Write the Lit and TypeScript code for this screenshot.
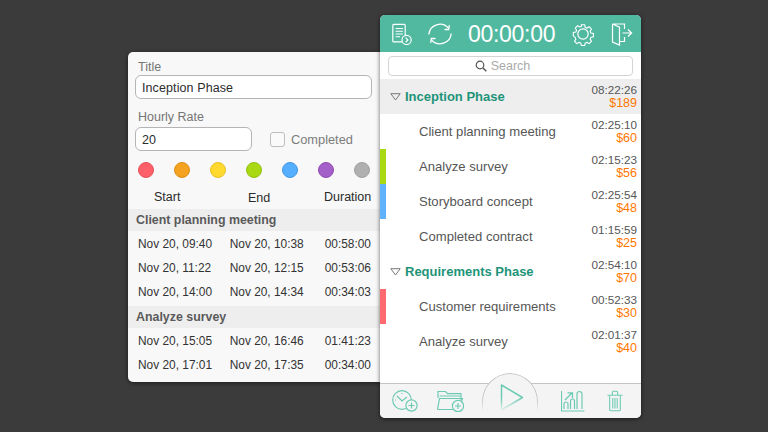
import { LitElement, html, css, svg } from "lit";
import { customElement } from "lit/decorators.js";

const dots = ["#ff5f68", "#f4a321", "#ffd92e", "#a8d912", "#56aeff", "#a45fc8", "#b0b0b0"];
const dotBorders = ["#e8505a", "#dc8f14", "#e8c020", "#93bf10", "#3f98e8", "#8f4cb0", "#a0a0a0"];

type Row = { name: string; time: string; cost: string; bar?: string; group?: boolean; shaded?: boolean };
const rows: Row[] = [
  { name: "Inception Phase", time: "08:22:26", cost: "$189", group: true, shaded: true },
  { name: "Client planning meeting", time: "02:25:10", cost: "$60" },
  { name: "Analyze survey", time: "02:15:23", cost: "$56", bar: "#a8d912" },
  { name: "Storyboard concept", time: "02:25:54", cost: "$48", bar: "#5fb2fb" },
  { name: "Completed contract", time: "01:15:59", cost: "$25" },
  { name: "Requirements Phase", time: "02:54:10", cost: "$70", group: true },
  { name: "Customer requirements", time: "00:52:33", cost: "$30", bar: "#ff6a70" },
  { name: "Analyze survey", time: "02:01:37", cost: "$40" },
];

const sessions: { title: string; items: string[][] }[] = [
  {
    title: "Client planning meeting",
    items: [
      ["Nov 20, 09:40", "Nov 20, 10:38", "00:58:00"],
      ["Nov 20, 11:22", "Nov 20, 12:15", "00:53:06"],
      ["Nov 20, 14:00", "Nov 20, 14:34", "00:34:03"],
    ],
  },
  {
    title: "Analyze survey",
    items: [
      ["Nov 20, 15:05", "Nov 20, 16:46", "01:41:23"],
      ["Nov 20, 17:01", "Nov 20, 17:35", "00:34:00"],
    ],
  },
];

const icoReport = svg`<svg width="22" height="22" viewBox="0 0 24 24" fill="none" stroke="#fff" stroke-width="1.300">
  <path d="M15.500 13V2.500a1 1 0 0 0-1-1H3a1 1 0 0 0-1 1v17a1 1 0 0 0 1 1h9"/>
  <path d="M5 6h8M5 9h8M5 12h8M5 15h5"/>
  <circle cx="17" cy="18.500" r="5"/><path d="M16 16l2.500 2.500-2.500 2.500"/></svg>`;
const icoSync = svg`<svg width="26" height="24" viewBox="0 0 26 24" fill="none" stroke="#fff" stroke-width="1.300">
  <path d="M1.800 12.500A11.200 11.200 0 0 1 21.500 6.200"/><path d="M24.200 11.500A11.200 11.200 0 0 1 4.500 17.800"/>
  <path d="M17.500 7.500l4.200 0 .6-4.300"/><path d="M8.500 16.500l-4.200 0-.6 4.300"/></svg>`;
const icoGear = svg`<svg width="24" height="24" viewBox="0 0 24 24" fill="none" stroke="#fff" stroke-width="1.200">
  <circle cx="12" cy="12" r="5.200"/>
  <path d="M10.200 2h3.600l.6 2.700 1.900.8 2.400-1.400 2.500 2.500-1.400 2.400.8 1.900 2.700.6v3.600l-2.700.6-.8 1.900 1.400 2.400-2.500 2.500-2.400-1.400-1.900.8-.6 2.700h-3.600l-.6-2.700-1.900-.8-2.400 1.400-2.500-2.500 1.400-2.400-.8-1.900L1.500 14v-3.600l2.700-.6.8-1.900-1.400-2.400 2.500-2.500 2.400 1.400 1.900-.8z" transform="translate(12 12) scale(.92) translate(-12 -12)"/></svg>`;
const icoExit = svg`<svg width="24" height="24" viewBox="0 0 24 24" fill="none" stroke="#fff" stroke-width="1.200">
  <path d="M14.500 7V2H2.500l7 3.200V23l-7-3V2"/><path d="M9.500 19.500h5V15"/>
  <path d="M12.500 11h9M18 7.500l3.600 3.500-3.600 3.500"/></svg>`;
const plus = (cx: number, cy: number) => svg`<circle cx=${cx} cy=${cy} r="5.600" fill="#f4f4f4"/><path d="M${cx - 3} ${cy}h6M${cx} ${cy - 3}v6"/>`;
const icoClock = svg`<svg width="26" height="22" viewBox="0 0 26 22" fill="none" stroke="#6ccab2" stroke-width="1.200">
  <circle cx="10" cy="10" r="9.300"/><path d="M10 3v1M3 10h1M5 6l5 5 5-4" />${plus(19.500, 15.500)}</svg>`;
const icoFolder = svg`<svg width="28" height="22" viewBox="0 0 28 22" fill="none" stroke="#6ccab2" stroke-width="1.200">
  <path d="M2 8V1.500h7.500l2 2.200H25V10"/><path d="M3.500 6h21"/><path d="M1.500 19.500 3.500 8.500H26.500L25 13"/><path d="M1.500 19.500H19"/>${plus(22, 16)}</svg>`;
const icoChart = svg`<svg width="24" height="22" viewBox="0 0 24 22" fill="none" stroke="#6ccab2" stroke-width="1.200">
  <path d="M.5 1v20h23"/><path d="M3 19v-5a2 2 0 0 1 4 0v5M9.500 19v-8a2 2 0 0 1 4 0v8M16 19V4a2.500 2.500 0 0 1 5 0v15"/>
  <path d="M4 10l7-7M6.500 2.800H11.500V8" stroke-width="1.300"/></svg>`;
const icoTrash = svg`<svg width="16" height="24" viewBox="0 0 18 24" fill="none" stroke="#6ccab2" stroke-width="1.200">
  <path d="M.5 5.500h17M6 5V2.500a1.500 1.500 0 0 1 1.500-1.500h3A1.500 1.500 0 0 1 12 2.500V5"/>
  <path d="M3 6v15.500a1.500 1.500 0 0 0 1.500 1.500h9a1.500 1.500 0 0 0 1.500-1.500V6M6.500 8.500v12M9 8.500v12M11.500 8.500v12"/></svg>`;
const icoSearch = svg`<svg width="12" height="12" viewBox="0 0 12 12" fill="none" stroke="#555" stroke-width="1.200"><circle cx="5" cy="5" r="3.800"/><path d="M7.800 7.800l3.500 3.500" stroke-width="1.500"/></svg>`;
const icoTri = svg`<svg width="11" height="8" viewBox="0 0 11 8" fill="none" stroke="#777" stroke-width="1"><path d="M.8.700h9.400L5.500 7z"/></svg>`;
const icoPlay = svg`<svg width="24" height="27" viewBox="0 0 24 27" fill="none" stroke="#6ccab2" stroke-width="1.500" stroke-linejoin="round"><path d="M1.500 1v25L22.500 13.500z"/></svg>`;

@customElement("app-root")
export class AppRoot extends LitElement {
  static styles = css`
    :host { display: block; position: relative; width: 768px; height: 432px; background: #3b3b3b; overflow: hidden;
      font-family: "Liberation Sans", Arial, sans-serif; }
    .left { position: absolute; left: 128px; top: 52px; width: 253px; height: 330px; box-sizing: border-box;
      background: #f8f8f8; border-radius: 5px 0 0 5px; box-shadow: 0 1px 4px rgba(0,0,0,.55); padding: 8px 0 0; overflow: hidden; }
    .lab { font-size: 12.500px; line-height: 15px; color: #757575; padding-left: 10px; }
    .input { box-sizing: border-box; height: 24px; background: #fff; border: 1px solid #b5b5b5; border-radius: 6px;
      font-size: 12.500px; line-height: 24px; color: #2c2c2c; padding-left: 6px; letter-spacing: .1px; }
    .t { width: 237px; margin: 0 0 0 7px; }
    .lab2 { margin-top: 11px; }
    .rate { display: flex; align-items: center; margin: 2px 0 0 7px; }
    .r { width: 117px; }
    .chk { box-sizing: border-box; width: 15px; height: 15px; background: #fafafa; border: 1px solid #bdbdbd; border-radius: 3px; margin-left: 18px; }
    .chkl { font-size: 12.800px; color: #7c7c7c; margin-left: 6px; }
    .dots { display: flex; gap: 20px; margin: 11px 0 0 10px; }
    .dot { box-sizing: border-box; width: 16px; height: 16px; border-radius: 50%; border: 1px solid; }
    .heads { display: grid; grid-template-columns: 94px 100px 59px; margin-top: 11px; height: 16px; font-size: 12.500px; line-height: 16px; color: #2a2a2a; }
    .heads span:nth-child(1) { padding-left: 26px; }
    .heads span:nth-child(2) { padding-left: 26px; padding-top: 1px; }
    .heads span:nth-child(3) { padding-left: 2px; white-space: nowrap; }
    .sec { margin-top: 4px; height: 22px; padding-left: 8px; background: #eeeeee; font-size: 12.400px; font-weight: 700; line-height: 22px; color: #5a5a5a; }
    .sec.next { margin-top: 2px; }
    .trow { display: grid; grid-template-columns: 91.700px 81px 60.300px; height: 24.300px; align-items: center; padding-left: 10px; font-size: 11.900px; color: #333; }
    .trow span:nth-child(3) { text-align: right; }
    .rows-first { height: .5px; }

    .right { position: absolute; left: 380px; top: 15px; width: 261px; height: 403px; display: flex; flex-direction: column;
      background: #fff; border-radius: 5px; box-shadow: 0 1px 4px rgba(0,0,0,.6); overflow: hidden; }
    .top { height: 37px; flex: none; background: #52b9a1; display: flex; align-items: center; color: #fff; padding-left: 11px; }
    .top svg { display: block; }
    .sync { margin-left: 14px; }
    .clock { font-size: 23px; letter-spacing: -.3px; margin-left: 15px; padding-top: 1px; width: 87px; white-space: nowrap; }
    .gear { margin-left: 16px; }
    .exit { margin-left: 15px; }
    .sb { height: 27px; flex: none; display: flex; align-items: center; padding: 0 8px; box-sizing: border-box; }
    .sf { flex: 1; box-sizing: border-box; height: 20px; padding-right: 16px; border: 1px solid #d4d4d4; border-radius: 4px; display: flex; align-items: center; justify-content: center; gap: 4px; font-size: 12.500px; color: #aaa; }
    .sf svg { display: block; }
    .list { flex: 1; }
    .row { position: relative; height: 35px; display: flex; align-items: center; justify-content: space-between; padding-right: 4px; }
    .row.s { background: #eeeeee; }
    .row .bar { position: absolute; left: 0; top: 0; bottom: 0; width: 6px; }
    .name { padding-left: 39px; font-size: 13.100px; color: #565656; }
    .row.g .name { padding-left: 4px; font-size: 13px; font-weight: 700; color: #1e9479; }
    .gl { display: flex; align-items: center; padding-left: 10px; }
    .gl svg { display: block; }
    .v { text-align: right; font-size: 11.700px; line-height: 12.500px; color: #565656; }
    .c { color: #ff7700; font-size: 12.500px; }
    .bot { position: relative; height: 35px; flex: none; background: #f4f4f4; border-top: 1px solid #c4c4c4; box-sizing: border-box; display: flex; align-items: center; }
    .bot svg { display: block; }
    .i1 { margin-left: 12px; } .i2 { margin-left: 18px; } .i3 { margin-left: 97px; } .i4 { margin-left: 22px; }
    .hump { position: absolute; left: 102px; top: -11px; width: 56px; height: 45px; box-sizing: border-box; background: #f4f4f4;
      border: 1px solid #c4c4c4; border-bottom: none; border-radius: 28px 28px 0 0; display: flex; justify-content: center; padding: 10px 0 0 4px;
      -webkit-mask-image: linear-gradient(#000 55%, transparent 85%); mask-image: linear-gradient(#000 55%, transparent 85%); }
  `;

  render() {
    return html`
      <div class="left">
        <div class="lab">Title</div>
        <div class="input t">Inception Phase</div>
        <div class="lab lab2">Hourly Rate</div>
        <div class="rate"><div class="input r">20</div><div class="chk"></div><div class="chkl">Completed</div></div>
        <div class="dots">${dots.map((c, i) => html`<div class="dot" style="background:${c};border-color:${dotBorders[i]}"></div>`)}</div>
        <div class="heads"><span>Start</span><span>End</span><span>Duration</span></div>
        ${sessions.map(
          (s, i) => html`<div class="sec ${i ? "next" : ""}">${s.title}</div><div class="rows-first"></div>
            ${s.items.map((r) => html`<div class="trow"><span>${r[0]}</span><span>${r[1]}</span><span>${r[2]}</span></div>`)}`
        )}
      </div>
      <div class="right">
        <div class="top">
          ${icoReport}<span class="sync">${icoSync}</span>
          <div class="clock">00:00:00</div>
          <span class="gear">${icoGear}</span><span class="exit">${icoExit}</span>
        </div>
        <div class="sb"><div class="sf">${icoSearch}<span>Search</span></div></div>
        <div class="list">
          ${rows.map(
            (r) => html`<div class="row ${r.group ? "g" : ""} ${r.shaded ? "s" : ""}">
              ${r.bar ? html`<div class="bar" style="background:${r.bar}"></div>` : ""}
              ${r.group
                ? html`<div class="gl">${icoTri}<div class="name">${r.name}</div></div>`
                : html`<div class="name">${r.name}</div>`}
              <div class="v">${r.time}<div class="c">${r.cost}</div></div>
            </div>`
          )}
        </div>
        <div class="bot">
          <div class="hump">${icoPlay}</div>
          <span class="i1">${icoClock}</span><span class="i2">${icoFolder}</span>
          <span class="i3">${icoChart}</span><span class="i4">${icoTrash}</span>
        </div>
      </div>
    `;
  }
}
